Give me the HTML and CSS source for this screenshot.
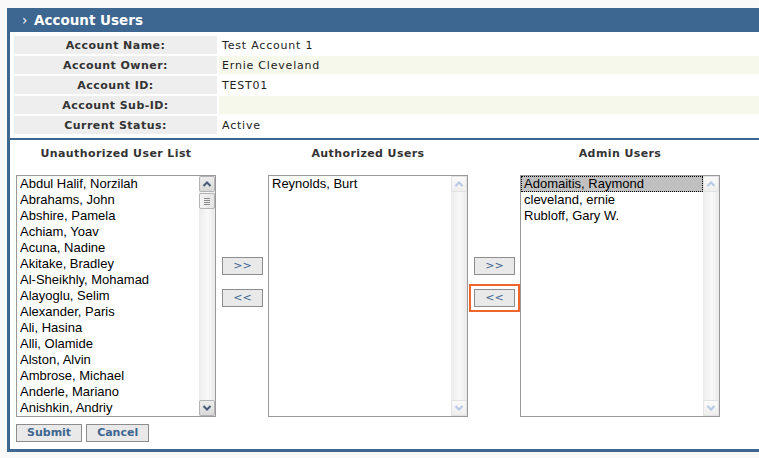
FILE: index.html
```html
<!DOCTYPE html>
<html>
<head>
<meta charset="utf-8">
<link rel="stylesheet" href="styles.css">
</head>
<body>
<div class="panel">
  <div class="panel-head"><span class="chev">›</span>Account Users</div>
  <div class="info">
    <div class="lbl">Account Name:</div><div class="val">Test Account 1</div>
    <div class="lbl">Account Owner:</div><div class="val alt">Ernie Cleveland</div>
    <div class="lbl">Account ID:</div><div class="val">TEST01</div>
    <div class="lbl">Account Sub-ID:</div><div class="val alt"></div>
    <div class="lbl">Current Status:</div><div class="val">Active</div>
  </div>
  <div class="users">
    <div class="cols">
      <div class="col-title">Unauthorized User List</div>
      <div></div>
      <div class="col-title">Authorized Users</div>
      <div></div>
      <div class="col-title">Admin Users</div>

      <div class="listbox">
        <div class="items">
          <div class="item">Abdul Halif, Norzilah</div>
          <div class="item">Abrahams, John</div>
          <div class="item">Abshire, Pamela</div>
          <div class="item">Achiam, Yoav</div>
          <div class="item">Acuna, Nadine</div>
          <div class="item">Akitake, Bradley</div>
          <div class="item">Al-Sheikhly, Mohamad</div>
          <div class="item">Alayoglu, Selim</div>
          <div class="item">Alexander, Paris</div>
          <div class="item">Ali, Hasina</div>
          <div class="item">Alli, Olamide</div>
          <div class="item">Alston, Alvin</div>
          <div class="item">Ambrose, Michael</div>
          <div class="item">Anderle, Mariano</div>
          <div class="item">Anishkin, Andriy</div>
        </div>
        <div class="sbar">
          <div class="sbtn"><svg width="14" height="14" viewBox="0 0 14 14"><path d="M3.5 9 L7 5.5 L10.5 9" fill="none" stroke="#4a5a78" stroke-width="2"/></svg></div>
          <div class="thumb"><span></span><span></span><span></span><span></span></div>
          <div class="track"></div>
          <div class="sbtn"><svg width="14" height="14" viewBox="0 0 14 14"><path d="M3.5 5 L7 8.5 L10.5 5" fill="none" stroke="#4a5a78" stroke-width="2"/></svg></div>
        </div>
      </div>

      <div class="movers">
        <button class="mv">&gt;&gt;</button>
        <button class="mv">&lt;&lt;</button>
      </div>

      <div class="listbox">
        <div class="items">
          <div class="item">Reynolds, Burt</div>
        </div>
        <div class="sbar">
          <div class="sbtn off"><svg width="14" height="14" viewBox="0 0 14 14"><path d="M3.5 9 L7 5.5 L10.5 9" fill="none" stroke="#b7c8e3" stroke-width="2"/></svg></div>
          <div class="track"></div>
          <div class="sbtn off"><svg width="14" height="14" viewBox="0 0 14 14"><path d="M3.5 5 L7 8.5 L10.5 5" fill="none" stroke="#b7c8e3" stroke-width="2"/></svg></div>
        </div>
      </div>

      <div class="movers">
        <button class="mv">&gt;&gt;</button>
        <button class="mv focus">&lt;&lt;</button>
      </div>

      <div class="listbox">
        <div class="items">
          <div class="item sel">Adomaitis, Raymond</div>
          <div class="item">cleveland, ernie</div>
          <div class="item">Rubloff, Gary W.</div>
        </div>
        <div class="sbar">
          <div class="sbtn off"><svg width="14" height="14" viewBox="0 0 14 14"><path d="M3.5 9 L7 5.5 L10.5 9" fill="none" stroke="#b7c8e3" stroke-width="2"/></svg></div>
          <div class="track"></div>
          <div class="sbtn off"><svg width="14" height="14" viewBox="0 0 14 14"><path d="M3.5 5 L7 8.5 L10.5 5" fill="none" stroke="#b7c8e3" stroke-width="2"/></svg></div>
        </div>
      </div>
    </div>
    <div class="actions">
      <button class="act">Submit</button>
      <button class="act">Cancel</button>
    </div>
  </div>
</div>
</body>
</html>
```

FILE: styles.css
```css
html, body {
  margin: 0;
  padding: 0;
  overflow: hidden;
  background: #f9f9f9;
}
body {
  padding: 8px 0 0 7px;
  font-family: "DejaVu Sans", Verdana, sans-serif;
  font-size: 11px;
  color: #222;
}
.panel {
  width: 780px;
  border-left: 3px solid #3d6690;
  border-bottom: 3px solid #3d6690;
  background: #fff;
}
.panel-head {
  height: 24px;
  background: #3d6690;
  color: #fff;
  font-size: 13.5px;
  font-weight: bold;
  line-height: 24px;
  padding-left: 12px;
  display: flex;
  align-items: center;
}
.chev {
  font-weight: normal;
  width: 12px;
}
.info {
  display: grid;
  grid-template-columns: 203px 1fr;
  grid-auto-rows: 18px;
  gap: 2px;
  padding: 4px 0 4px 4px;
  border-bottom: 2px solid #3d6690;
}
.lbl {
  background: #eeeeee;
  font-weight: bold;
  color: #333;
  text-align: center;
  line-height: 19px;
  letter-spacing: 0.45px;
}
.val {
  line-height: 19px;
  padding-left: 3px;
  color: #222;
  letter-spacing: 0.8px;
}
.val.alt {
  background: #f6f8eb;
}
.users {
  padding: 4px 0 7px 6px;
}
.cols {
  display: grid;
  grid-template-columns: 200px 52px 200px 52px 200px;
  grid-template-rows: 20px auto;
  row-gap: 11px;
}
.col-title {
  font-weight: bold;
  color: #333;
  text-align: center;
  line-height: 20px;
  letter-spacing: 0.4px;
}
.listbox {
  height: 240px;
  border: 1px solid #999;
  display: flex;
  background: #fff;
}
.items {
  flex: 1;
  font-family: "Liberation Sans", Arial, sans-serif;
  font-size: 13px;
  color: #000;
}
.item {
  height: 16px;
  line-height: 16px;
  padding-left: 3px;
  white-space: nowrap;
}
.item.sel {
  background: #c0c0c0;
  outline: 1px dotted #000;
  outline-offset: -1px;
}
.sbar {
  width: 16px;
  display: flex;
  flex-direction: column;
  background: linear-gradient(to right, #ececec, #f9f9f9 55%, #e9e9e9);
}
.track {
  flex: 1;
}
.sbtn {
  width: 14px;
  height: 14px;
  border: 1px solid #b4b4b4;
  border-radius: 2px;
  background: linear-gradient(#eeeeee, #d9d9d9);
  display: flex;
}
.sbtn.off {
  border-color: #e2e2e2;
  background: linear-gradient(#fafafa, #eeeeee);
}
.thumb {
  width: 14px;
  height: 14px;
  margin-top: 1px;
  border: 1px solid #b4b4b4;
  border-radius: 2px;
  background: linear-gradient(to right, #f4f4f4, #e4e4e4);
  display: flex;
  flex-direction: column;
  align-items: center;
  justify-content: center;
  gap: 1px;
}
.thumb span {
  width: 6px;
  height: 1px;
  background: #8a8a8a;
}
.movers {
  display: flex;
  flex-direction: column;
  align-items: center;
  padding-top: 82px;
  gap: 14px;
}
.mv {
  width: 41px;
  height: 18px;
  margin: 0 0 0 1px;
  padding: 0;
  border: 1px solid #8c8c8c;
  background: #e9e9e9;
  color: #3d6690;
  font-family: "DejaVu Sans", Verdana, sans-serif;
  font-size: 11px;
  line-height: 16px;
}
.mv.focus {
  outline: 2px solid #f0662a;
  outline-offset: 3px;
}
.actions {
  display: flex;
  gap: 4px;
  margin-top: 7px;
}
.act {
  height: 18px;
  padding: 0 10px;
  margin: 0;
  border: 1px solid #8c8c8c;
  background: #e9e9e9;
  color: #3d6690;
  font-family: "DejaVu Sans", Verdana, sans-serif;
  font-size: 11px;
  font-weight: bold;
  line-height: 16px;
}
```
